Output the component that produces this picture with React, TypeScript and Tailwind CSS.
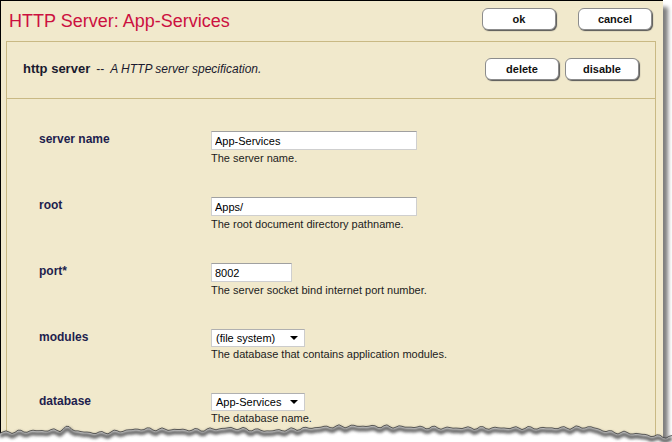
import React from 'react';

interface FieldRow {
  label: string;
  kind: 'input' | 'select';
  value: string;
  width: number;
  help: string;
}

const ROWS: FieldRow[] = [
  { label: 'server name', kind: 'input', value: 'App-Services', width: 206, help: 'The server name.' },
  { label: 'root', kind: 'input', value: 'Apps/', width: 206, help: 'The root document directory pathname.' },
  { label: 'port*', kind: 'input', value: '8002', width: 81, help: 'The server socket bind internet port number.' },
  { label: 'modules', kind: 'select', value: '(file system)', width: 94, help: 'The database that contains application modules.' },
  { label: 'database', kind: 'select', value: 'App-Services', width: 94, help: 'The database name.' },
];

// key points of the torn paper edge (x, y relative to svg top at 418)
const EDGE_KEYS: [number, number][] = [
  [0, 14.5], [30, 13], [60, 12], [68, 9], [80, 14], [100, 15], [140, 11], [200, 12],
  [230, 10], [270, 13], [323, 9], [357, 8], [410, 9], [447, 10], [480, 10], [560, 10],
  [590, 9], [610, 14], [630, 15], [655, 18], [672, 19],
];

function edgePoints(): [number, number][] {
  const pts: [number, number][] = [];
  for (let x = 0; x <= 672; x += 3) {
    let i = 0;
    while (i < EDGE_KEYS.length - 2 && EDGE_KEYS[i + 1][0] < x) i++;
    const [x0, y0] = EDGE_KEYS[i];
    const [x1, y1] = EDGE_KEYS[i + 1];
    const t = Math.min(1, Math.max(0, (x - x0) / (x1 - x0)));
    const noise = Math.sin(x * 1.7) * 0.9 + Math.sin(x * 0.53 + 1) * 0.8;
    pts.push([x, y0 + (y1 - y0) * t + noise]);
  }
  return pts;
}

const TornEdge: React.FC = () => {
  const pts = edgePoints();
  const line = pts.map(([x, y], i) => `${i === 0 ? 'M' : 'L'}${x} ${y.toFixed(1)}`).join(' ');
  const shadow = pts.map(([x, y], i) => `${i === 0 ? 'M' : 'L'}${x} ${(y + 3).toFixed(1)}`).join(' ');
  return (
    <svg className="absolute left-0 top-[418px]" width="672" height="24" viewBox="0 0 672 24">
      <defs>
        <filter id="blur" x="-5%" y="-50%" width="110%" height="200%">
          <feGaussianBlur stdDeviation="1.6" />
        </filter>
      </defs>
      <path d={`${line} L672 24 L0 24 Z`} fill="#ffffff" />
      <path d={shadow} stroke="#4a4a4a" strokeWidth="4" fill="none" filter="url(#blur)" opacity="0.85" />
      <path d={line} stroke="#3a3a3a" strokeWidth="0.8" fill="none" />
    </svg>
  );
};

const Button: React.FC<{ label: string }> = ({ label }) => (
  <button className="w-[74px] h-[22px] bg-white border border-[#8c8c8c] rounded-[6px] shadow-[1px_1px_1px_#555] text-[11px] font-bold text-[#111] leading-none">
    {label}
  </button>
);

const Field: React.FC<{ row: FieldRow }> = ({ row }) => (
  <div className="flex">
    <div className="w-[172px] pt-[1px] text-[12px] leading-[14px] font-bold text-[#1e1e4e]">{row.label}</div>
    <div className="flex flex-col">
      {row.kind === 'input' ? (
        <input
          readOnly
          value={row.value}
          style={{ width: row.width }}
          className="h-[19px] bg-white border border-[#cfcfcf] border-t-[#a0a0a0] pl-[3px] text-[11px] text-black outline-none"
        />
      ) : (
        <div
          style={{ width: row.width }}
          className="h-[18px] bg-white border border-[#cccccc] border-t-[#b0b0b0] pl-[4px] pr-[6px] flex items-center justify-between text-[11px] text-black"
        >
          <span>{row.value}</span>
          <span className="w-0 h-0 border-l-[4px] border-r-[4px] border-t-[4px] border-l-transparent border-r-transparent border-t-black" />
        </div>
      )}
      <div className={`${row.kind === 'input' ? 'mt-[2px]' : 'mt-[1px]'} text-[11px] leading-[13px] text-[#1c1c1c]`}>{row.help}</div>
    </div>
  </div>
);

export default function App() {
  return (
    <div className="relative w-[672px] h-[442px] overflow-hidden bg-white" style={{ fontFamily: '"Liberation Sans", Arial, sans-serif' }}>
      <div className="w-[663px] h-[470px] bg-[#f1e9cc] border-l border-t border-black shadow-[5px_7px_4px_rgba(0,0,0,0.5)]">
        {/* title bar */}
        <div className="h-[40px] flex items-start justify-between pl-[8px] pr-[11px]">
          <h1 className="mt-[10px] text-[18px] leading-[21px] text-[#cc1040] font-normal">HTTP Server: App-Services</h1>
          <div className="flex gap-[22px] mt-[7px]">
            <Button label="ok" />
            <Button label="cancel" />
          </div>
        </div>

        {/* panel */}
        <div className="ml-[5px] w-[650px] border border-[#c9b984]">
          <div className="h-[57px] flex items-start justify-between pl-[16px] pr-[16px] border-b border-[#c9b984]">
            <div className="mt-[17px] flex items-baseline text-[#1a1a2e]">
              <span className="text-[13px] font-bold">http server</span>
              <span className="text-[12px] ml-[6px]">--</span>
              <span className="text-[12px] italic ml-[6px]">A HTTP server specification.</span>
            </div>
            <div className="flex gap-[6px] mt-[16px]">
              <Button label="delete" />
              <Button label="disable" />
            </div>
          </div>
          <div className="pt-[32px] pl-[32px] flex flex-col gap-[32px] pb-[40px]">
            {ROWS.map(row => (
              <Field key={row.label} row={row} />
            ))}
          </div>
        </div>
      </div>
      <TornEdge />
    </div>
  );
}
